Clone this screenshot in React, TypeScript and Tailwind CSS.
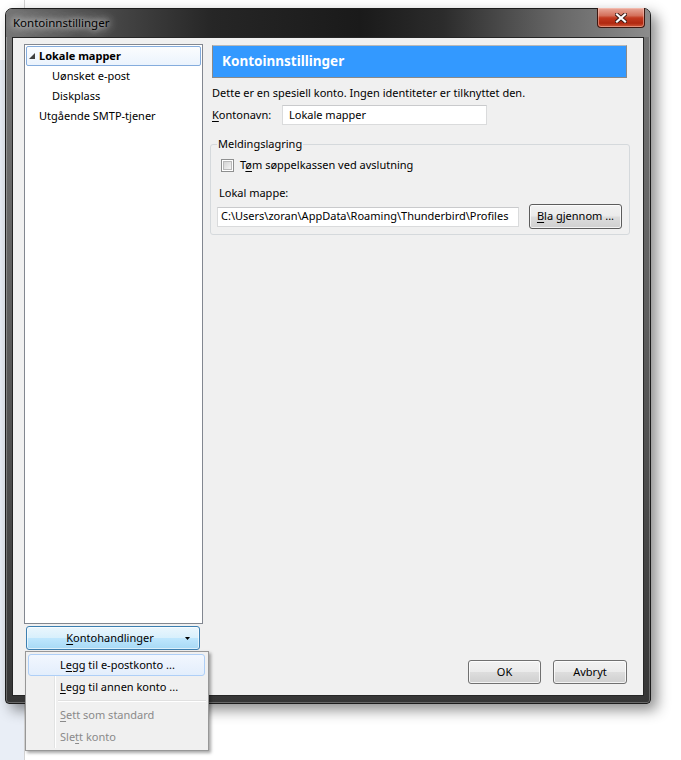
import React from 'react';

function U({ children }: { children: React.ReactNode }) {
  return <span className="underline decoration-1 underline-offset-[2px]">{children}</span>;
}

const winButton =
  'h-[24px] flex items-center justify-center rounded-[3px] border border-[#707070] bg-[linear-gradient(to_bottom,#f2f2f2_0%,#ebebeb_48%,#dddddd_52%,#cfcfcf_100%)] shadow-[inset_0_0_0_1px_rgba(255,255,255,0.75)]';

export default function App() {
  return (
    <div className="relative w-[681px] h-[760px] overflow-hidden bg-white font-['Noto_Sans',sans-serif] text-[11px] text-black">
      {/* what is visible of the app behind the dialog */}
      <div className="absolute left-0 top-[60px] bottom-0 w-[24px] bg-[#e9eef6]" />
      <div className="absolute left-[24px] top-0 bottom-0 w-px bg-[#d3d3d3]" />

      {/* dialog window */}
      <div className="relative ml-[5px] mt-[8px] w-[646px] h-[696px] flex flex-col rounded-t-[7px] rounded-b-[4px] border border-[#1c1c1c] bg-[linear-gradient(to_bottom,#777777_0%,#5e5e5e_45%,#363636_100%)] shadow-[6px_6px_14px_rgba(0,0,0,0.45),inset_0_0_0_1px_rgba(255,255,255,0.25)]">
        {/* title bar */}
        <div className="h-[28px] flex items-start justify-between rounded-t-[6px] bg-[linear-gradient(to_right,#747474_0%,#4c4c4c_14%,#262626_32%,#1a1a1a_55%,#2c2c2c_68%,#686868_86%,#8c8c8c_100%)]">
          <span className="ml-[7px] self-center text-[11.5px] text-black [text-shadow:0_0_6px_rgba(255,255,255,0.95),0_0_12px_rgba(255,255,255,0.8),0_0_18px_rgba(255,255,255,0.6)]">
            Kontoinnstillinger
          </span>
          <div className="mr-[5px] -mt-[1px] w-[48px] h-[20px] flex items-center justify-center rounded-b-[4px] border border-t-0 border-[#3d1710] bg-[linear-gradient(to_bottom,#e9a99b_0%,#d4705b_40%,#c23a20_52%,#b02810_80%,#d25a3a_100%)] shadow-[inset_0_0_0_1px_rgba(255,210,200,0.45)]">
            <svg width="12" height="10" viewBox="0 0 12 10">
              <path d="M2 1.5 L10 8.5 M10 1.5 L2 8.5" stroke="#3a1a14" strokeWidth="4" strokeLinecap="square" />
              <path d="M2 1.5 L10 8.5 M10 1.5 L2 8.5" stroke="#ffffff" strokeWidth="2.2" strokeLinecap="square" />
            </svg>
          </div>
        </div>

        {/* frame around client area */}
        <div className="flex-1 flex px-[6px] pb-[7px]">
          <div className="flex-1 flex border border-[#262626] bg-[#f0f0f0] pt-[6px] pl-[11px] pr-[13px]">
            {/* left column */}
            <div className="w-[179px] flex flex-col pb-[45px]">
              <div className="flex-1 border border-[#828790] bg-white pt-[1px] px-[1px]">
                <div className="h-[20px] flex items-center rounded-[2px] border border-[#84acdd] bg-[linear-gradient(to_bottom,#fbfcfe,#ebf3fd)]">
                  <svg width="6" height="6" viewBox="0 0 6 6" className="ml-[2px]">
                    <polygon points="6,0 6,6 0,6" fill="#404040" />
                  </svg>
                  <span className="ml-[4px] font-bold">Lokale mapper</span>
                </div>
                <div className="h-[20px] flex items-center pl-[26px]">Uønsket e-post</div>
                <div className="h-[20px] flex items-center pl-[26px]">Diskplass</div>
                <div className="h-[20px] flex items-center pl-[13px]">Utgående SMTP-tjener</div>
              </div>
              <div className="mt-[2px] ml-[2px] mr-[3px] h-[24px] flex items-center rounded-[3px] border border-[#3c7fb1] bg-[linear-gradient(to_bottom,#eaf6fd_0%,#d9f0fc_48%,#bee6fd_52%,#a7d9f5_100%)] shadow-[inset_0_0_0_1px_rgba(255,255,255,0.6)]">
                <span className="flex-1 text-center pl-[8px]">
                  <U>K</U>ontohandlinger
                </span>
                <svg width="5" height="3" viewBox="0 0 5 3" className="mr-[9px]">
                  <polygon points="0,0 5,0 2.5,3" fill="#000" />
                </svg>
              </div>
            </div>

            {/* right column */}
            <div className="ml-[7px] w-[420px] flex flex-col">
              <div className="mt-[1px] ml-[2px] w-[415px] h-[33px] flex items-center border border-[#8a8a8a] border-t-[#b8b8b8] bg-[#3399ff] pl-[9px]">
                <span className="text-[13.5px] font-bold text-white">Kontoinnstillinger</span>
              </div>
              <div className="mt-[7px] ml-[2px] leading-[15px]">
                Dette er en spesiell konto. Ingen identiteter er tilknyttet den.
              </div>
              <div className="mt-[5px] ml-[2px] h-[20px] flex items-center">
                <span className="w-[70px]">
                  <U>K</U>ontonavn:
                </span>
                <div className="w-[205px] h-[20px] flex items-center border border-[#dadbdc] border-t-[#c9cacc] bg-white pl-[6px]">
                  Lokale mapper
                </div>
              </div>

              <fieldset className="mt-[12px] rounded-[3px] border border-[#d5d9dc] px-[6px] pb-[5px]">
                <legend className="px-[1px] leading-[14px]">Meldingslagring</legend>
                <div className="mt-[6px] h-[16px] flex items-center">
                  <div className="ml-[4px] w-[13px] h-[13px] border border-[#8e8f8f] bg-white p-[1px]">
                    <div className="w-full h-full border border-[#b9b9b9] bg-[linear-gradient(135deg,#d3d3d3,#f4f4f4)]" />
                  </div>
                  <span className="ml-[6px]">
                    T<U>ø</U>m søppelkassen ved avslutning
                  </span>
                </div>
                <div className="mt-[12px] ml-[2px] leading-[15px]">Lokal mappe:</div>
                <div className="mt-[4px] h-[25px] flex items-center">
                  <div className="w-[302px] h-[20px] flex items-center overflow-hidden whitespace-nowrap border border-[#dadbdc] border-t-[#c9cacc] bg-white pl-[3px]">
                    C:\Users\zoran\AppData\Roaming\Thunderbird\Profiles
                  </div>
                  <div className={`ml-[10px] w-[93px] !h-[25px] ${winButton} !border-[#5c5c5c]`}>
                    <span>
                      <U>B</U>la gjennom ...
                    </span>
                  </div>
                </div>
              </fieldset>

              <div className="mt-auto mb-[11px] mr-[3px] flex justify-end gap-[12px]">
                <div className={`w-[73px] ${winButton}`}>OK</div>
                <div className={`w-[74px] ${winButton}`}>Avbryt</div>
              </div>
            </div>
          </div>
        </div>
      </div>

      {/* open drop-down menu of Kontohandlinger */}
      <div className="absolute left-[25px] top-[651px] w-[184px] h-[100px] border border-[#979797] bg-[#f0f0f0] p-[2px] shadow-[2px_2px_3px_rgba(0,0,0,0.35)]">
        <div className="absolute left-[28px] top-[2px] bottom-[2px] w-px bg-[#e2e3e3]" />
        <div className="absolute left-[29px] top-[2px] bottom-[2px] w-px bg-white" />
        <div className="relative h-[22px] flex items-center rounded-[3px] border border-[#aecff7] bg-[linear-gradient(to_bottom,#f2f7fe,#e3eefc)] pl-[31px] mr-[1px]">
          L<U>e</U>gg til e-postkonto ...
        </div>
        <div className="relative h-[22px] flex items-center border border-transparent pl-[31px]">
          <U>L</U>egg til annen konto ...
        </div>
        <div className="relative h-[6px] ml-[30px] flex flex-col justify-center">
          <div className="h-px bg-[#e0e0e0]" />
          <div className="h-px bg-white" />
        </div>
        <div className="relative h-[22px] flex items-center border border-transparent pl-[31px] text-[#8a8a8a]">
          <U>S</U>ett som standard
        </div>
        <div className="relative h-[22px] flex items-center border border-transparent pl-[31px] text-[#8a8a8a]">
          Sle<U>t</U>t konto
        </div>
      </div>
    </div>
  );
}
